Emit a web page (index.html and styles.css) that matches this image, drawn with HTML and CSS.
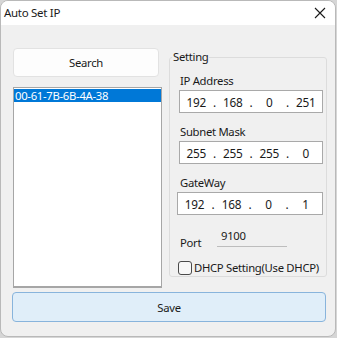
FILE: index.html
```html
<!DOCTYPE html>
<html lang="en">

<head>
  <meta charset="UTF-8" />
  <title>Auto Set IP</title>
  <link rel="stylesheet" href="styles.css">
</head>

<body>

  <div class="window">
    <div class="titlebar">
      <span class="title">Auto Set IP</span>
      <span class="close">
        <svg width="12" height="12" viewBox="0 0 12 12">
          <path d="M1 1 L11 11 M11 1 L1 11" stroke="#1a1a1a" stroke-width="1.1" fill="none" />
        </svg>
      </span>
    </div>

    <div class="content">
      <div class="top">
        <div class="left-col">
          <button class="btn-search">Search</button>
          <div class="listbox">
            <div class="list-item selected">00-61-7B-6B-4A-38</div>
          </div>
        </div>

        <fieldset class="group">
          <legend>Setting</legend>

          <div class="field-label first">IP Address</div>
          <div class="ip-box">
            <span class="oct">192</span><span class="dot">.</span>
            <span class="oct">168</span><span class="dot">.</span>
            <span class="oct">0</span><span class="dot">.</span>
            <span class="oct">251</span>
          </div>

          <div class="field-label">Subnet Mask</div>
          <div class="ip-box">
            <span class="oct">255</span><span class="dot">.</span>
            <span class="oct">255</span><span class="dot">.</span>
            <span class="oct">255</span><span class="dot">.</span>
            <span class="oct">0</span>
          </div>

          <div class="field-label">GateWay</div>
          <div class="ip-box gw">
            <span class="oct">192</span><span class="dot">.</span>
            <span class="oct">168</span><span class="dot">.</span>
            <span class="oct">0</span><span class="dot">.</span>
            <span class="oct">1</span>
          </div>

          <div class="port-row">
            <span class="port-label">Port</span>
            <span class="port-value">9100</span>
          </div>

          <label class="check-row">
            <span class="checkbox"></span>
            <span>DHCP Setting(Use DHCP)</span>
          </label>
        </fieldset>
      </div>

      <button class="btn-save">Save</button>
    </div>
  </div>

</body>

</html>
```

FILE: styles.css
```css
* {
  box-sizing: border-box;
}

body {
  margin: 0;
  background: #d6d6d6;
  font-family: 'Noto Sans', 'Open Sans', sans-serif;
  font-size: 11.3px;
  letter-spacing: -0.3px;
  color: #1a1a1a;
}

.window {
  width: 336px;
  height: 337px;
  border: 1px solid #b9b9b9;
  border-radius: 8px;
  overflow: hidden;
  background: #f0f0f0;
  display: flex;
  flex-direction: column;
}

.titlebar {
  height: 24px;
  background: white;
  display: flex;
  align-items: center;
  justify-content: space-between;
  padding: 0 9px 0 3px;
  flex-shrink: 0;
}

.title {
  font-size: 11.5px;
  line-height: 16px;
}

.close {
  display: flex;
  align-items: center;
}

.content {
  padding: 23px 8px 0 12px;
}

.top {
  display: flex;
  gap: 7px;
  height: 240px;
}

.left-col {
  width: 149px;
  display: flex;
  flex-direction: column;
}

.btn-search {
  width: 146px;
  height: 29px;
  background: #fdfdfd;
  border: 1px solid #e2e2e2;
  border-radius: 4px;
  font-family: inherit;
  font-size: 11.3px;
  letter-spacing: -0.3px;
  color: #1a1a1a;
  padding: 0;
}

.listbox {
  margin-top: 10px;
  height: 201px;
  background: white;
  border: 1px solid #a6a6a6;
  border-bottom-width: 2px;
  padding: 1px 0 0 0;
}

.list-item {
  height: 13px;
  line-height: 13px;
  padding-left: 1px;
}

.list-item.selected {
  background: #0078d7;
  color: white;
}

.group {
  flex: 1;
  margin: 0;
  margin-top: 2px;
  height: 227px;
  border: 1px solid #dcdcdc;
  border-radius: 3px;
  padding: 0 3px 0 9px;
  min-width: 0;
}

.group legend {
  padding: 0 1px;
  margin-left: -7px;
  line-height: 14px;
}

.field-label {
  line-height: 16px;
  margin-top: 11px;
  padding-left: 1px;
}

.field-label.first {
  margin-top: 9px;
}

.ip-box {
  margin-top: 1px;
  height: 23px;
  background: white;
  border: 1px solid #a9a9a9;
  display: flex;
  align-items: center;
  font-size: 11.8px;
}

.ip-box.gw {
  margin-left: -2px;
}

.oct {
  flex: 1;
  text-align: center;
}

.dot {
  width: 4px;
  text-align: center;
}

.port-row {
  display: flex;
  align-items: flex-start;
  margin-top: 15px;
  height: 18px;
}

.port-label {
  padding-left: 1px;
  margin-top: 5px;
  width: 38px;
}

.port-value {
  width: 70px;
  height: 17px;
  border-bottom: 1px solid #bdbdbd;
  padding-left: 4px;
  line-height: 12px;
}

.check-row {
  display: flex;
  align-items: center;
  gap: 2px;
  margin-top: 12px;
  margin-left: -1px;
  white-space: nowrap;
}

.checkbox {
  width: 14px;
  height: 14px;
  border: 1px solid #4a4a4a;
  border-radius: 3px;
  background: #f7f7f7;
}

.btn-save {
  display: block;
  width: 314px;
  height: 30px;
  margin: 4px 0 0 -1px;
  background: #e0eef9;
  border: 1px solid #88b4dc;
  border-radius: 4px;
  font-family: inherit;
  font-size: 11.3px;
  letter-spacing: -0.3px;
  color: #1a1a1a;
  padding: 0;
}
```
